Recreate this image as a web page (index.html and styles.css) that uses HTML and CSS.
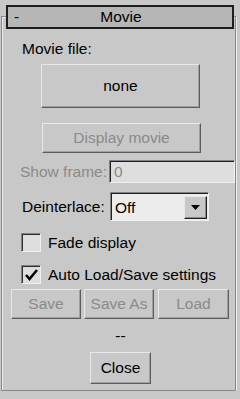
FILE: index.html
```html
<!DOCTYPE html>
<html lang="en">
<head>
  <meta charset="UTF-8"/>
  <meta name="viewport" content="width=device-width,initial-scale=1.0"/>
  <title>Movie</title>
  <link rel="stylesheet" href="styles.css">
</head>
<body>
  <div class="rollout">
    <div class="title">
      <span class="minus">-</span>
      <span class="caption">Movie</span>
    </div>

    <div class="label">Movie file:</div>
    <div class="btn file">none</div>
    <div class="btn display off">Display movie</div>

    <div class="row frame-row">
      <span class="off name">Show frame:</span>
      <span class="field off">0</span>
    </div>

    <div class="row deint-row">
      <span class="name">Deinterlace:</span>
      <div class="select">
        <span class="value">Off</span>
        <span class="arrow"><svg width="9" height="5" viewBox="0 0 9 5"><path d="M0 0H9L4.5 5Z" fill="#000"/></svg></span>
      </div>
    </div>

    <div class="check fade">
      <span class="box"></span>
      <span>Fade display</span>
    </div>
    <div class="check auto">
      <span class="box"><svg width="13" height="12" viewBox="0 0 13 12"><path d="M1 6L4.5 10L12 1" fill="none" stroke="#000" stroke-width="2.6"/></svg></span>
      <span>Auto Load/Save settings</span>
    </div>

    <div class="btn-row">
      <div class="btn small off">Save</div>
      <div class="btn small off">Save As</div>
      <div class="btn small load off">Load</div>
    </div>

    <div class="dash">--</div>
    <div class="btn close">Close</div>
  </div>
</body>
</html>
```

FILE: styles.css
```css
body { margin:0; padding-top:16px; background:#c8c8c8; font-family:"Liberation Sans", Arial, sans-serif; font-size:15.5px; line-height:18px; color:#000; }
.rollout { box-sizing:border-box; margin-left:1px; width:235px; height:375px; border:1px solid #878787; box-shadow:inset 1px 1px 0 #ececec, 1px 1px 0 #ececec; }

.title { box-sizing:border-box; margin:-12px 0 0 4px; width:228px; height:24px; border:2px solid #1e1e1e; background:#b6b6b6; display:grid; grid-template-columns:1fr auto 1fr; align-items:center; }
.minus { padding-left:6px; }
.caption { padding-left:2px; }

.label { margin-top:11px; padding-left:20px; }
.off { color:#8a8a8a; }

.btn { box-sizing:border-box; display:flex; align-items:center; justify-content:center; border:1px solid; border-color:#e8e8e8 #5c5c5c #5c5c5c #e8e8e8; box-shadow:inset -1px -1px 0 #a0a0a0; }
.file { margin:6px 0 0 39px; width:159px; height:44px; }
.display { margin:15px 0 0 40px; width:159px; height:30px; }

.row { display:flex; align-items:center; }
.frame-row { margin-top:7px; height:23px; padding-left:18px; }
.frame-row .name { width:89px; }
.field { box-sizing:border-box; width:126px; height:23px; padding-left:4px; background:#dedede; border:1px solid; border-color:#808080 #f0f0f0 #f0f0f0 #808080; box-shadow:inset 1px 1px 0 #202020; display:flex; align-items:center; }

.deint-row { margin-top:9px; height:29px; padding-left:20px; }
.deint-row .name { width:88px; }
.select { box-sizing:border-box; width:99px; height:29px; background:#ececec; border:1px solid; border-color:#808080 #f0f0f0 #f0f0f0 #808080; box-shadow:inset 1px 1px 0 #202020; display:flex; align-items:center; justify-content:space-between; padding:2px 1px 1px 4px; }
.value { padding-top:2px; }
.arrow { box-sizing:border-box; width:23px; height:23px; background:#c8c8c8; border:1px solid; border-color:#e8e8e8 #202020 #202020 #e8e8e8; box-shadow:inset -1px -1px 0 #8a8a8a; display:flex; align-items:center; justify-content:center; }

.check { display:flex; align-items:center; height:19px; padding-left:19px; }
.fade { margin-top:12px; }
.auto { margin-top:13px; }
.box { box-sizing:border-box; width:20px; height:19px; margin-right:7px; background:#dedede; border:1px solid; border-color:#808080 #f0f0f0 #f0f0f0 #808080; box-shadow:inset 1px 1px 0 #303030; display:flex; align-items:center; justify-content:center; }

.btn-row { display:flex; margin-top:5px; padding-left:9px; }
.small { width:70px; height:30px; margin-right:3px; }
.small + .small { margin-right:4px; }
.load { width:71px; }

.dash { margin-top:8px; padding-left:4px; text-align:center; }
.close { margin:7px 0 0 88px; width:61px; height:32px; }
```
